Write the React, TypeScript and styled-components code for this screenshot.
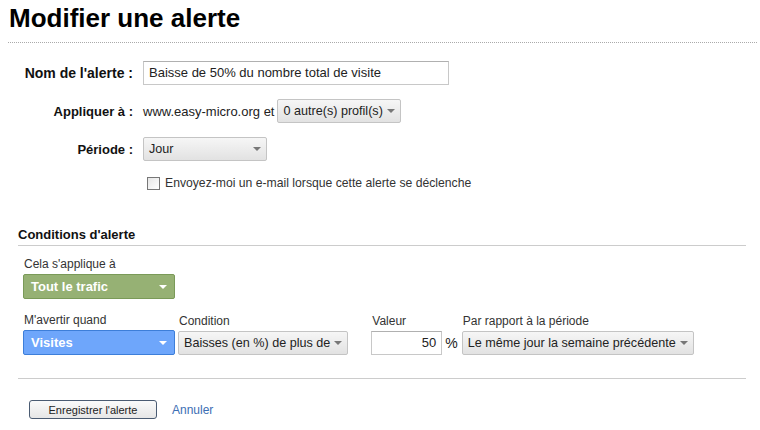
import React from 'react';
import styled, { createGlobalStyle } from 'styled-components';

const GlobalStyle = createGlobalStyle`
  body {
    margin: 0;
    background: #fff;
    font-family: "Liberation Sans", Arial, sans-serif;
    color: #222;
  }
`;

const Page = styled.div`
  width: 760px;
  padding: 3px 3px 0 8px;
  box-sizing: border-box;
`;

const Title = styled.h1`
  margin: 0;
  padding-left: 1px;
  font-size: 26px;
  line-height: 30px;
  font-weight: bold;
  color: #000;
  padding-bottom: 9px;
  border-bottom: 1px dotted #aaa;
`;

const Form = styled.div`
  display: grid;
  grid-template-columns: 125px auto;
  column-gap: 10px;
  row-gap: 14px;
  align-items: center;
  margin-top: 18px;
  justify-content: start;
`;

const Label = styled.label<{ $strong?: boolean }>`
  text-align: right;
  font-size: ${p => (p.$strong ? '14px' : '13px')};
  font-weight: bold;
  color: #111;
`;

const Row = styled.div`
  display: flex;
  align-items: center;
  gap: 3px;
  font-size: 13px;
`;

const TextInput = styled.div<{ $w: number; $right?: boolean }>`
  width: ${p => p.$w}px;
  height: 24px;
  box-sizing: border-box;
  border: 1px solid #c8c8c8;
  border-top-color: #b0b0b0;
  padding: 0 5px;
  font-size: 13px;
  line-height: 22px;
  color: #222;
  text-align: ${p => (p.$right ? 'right' : 'left')};
  background: #fff;
`;

const Caret = styled.span<{ $light?: boolean }>`
  width: 0;
  height: 0;
  border-left: 4px solid transparent;
  border-right: 4px solid transparent;
  border-top: 4px solid ${p => (p.$light ? '#fff' : '#777')};
  margin-left: 4px;
  flex-shrink: 0;
`;

const GrayButton = styled.div<{ $w?: number }>`
  display: inline-flex;
  align-items: center;
  justify-content: space-between;
  width: ${p => (p.$w ? `${p.$w}px` : 'auto')};
  height: 24px;
  box-sizing: border-box;
  padding: 0 5px 0 5px;
  border: 1px solid #c4c4c4;
  border-radius: 2px;
  background: linear-gradient(#f6f6f6, #e2e2e2);
  font-size: 12.6px;
  color: #222;
  white-space: nowrap;
`;

const ColorSelect = styled.div<{ $bg: string; $border: string }>`
  display: flex;
  align-items: center;
  justify-content: space-between;
  width: 152px;
  height: 25px;
  box-sizing: border-box;
  padding: 0 7px 0 7px;
  background: ${p => p.$bg};
  border: 1px solid ${p => p.$border};
  border-radius: 2px;
  color: #fff;
  font-weight: bold;
  font-size: 13px;
`;

const CheckRow = styled.div`
  grid-column: 2;
  display: flex;
  align-items: center;
  gap: 5px;
  padding-left: 4px;
  margin-top: 1px;
  font-size: 12.2px;
  color: #333;
`;

const Box = styled.span`
  width: 11px;
  height: 11px;
  border: 1px solid #777;
  background: linear-gradient(135deg, #e6e6e6, #fff);
`;

const Section = styled.section`
  margin: 37px 11px 0 10px;
`;

const SectionTitle = styled.h2`
  margin: 0;
  font-size: 13px;
  font-weight: bold;
  color: #111;
  line-height: 16px;
  padding-bottom: 2px;
  border-bottom: 1px solid #ccc;
`;

const Conditions = styled.div`
  padding: 11px 0 0 5px;
`;

const Field = styled.div<{ $offset?: number }>`
  display: flex;
  flex-direction: column;
  gap: 3px;
  margin-left: ${p => p.$offset ?? 0}px;
`;

const FieldLabel = styled.span`
  font-size: 12px;
  line-height: 14px;
  color: #333;
  padding-left: 1px;
`;

const FieldRow = styled.div`
  display: flex;
  align-items: flex-end;
  margin-top: 14px;
`;

const Percent = styled.span`
  font-size: 14px;
  color: #222;
  margin: 0 4px 4px 3px;
`;

const Footer = styled.div`
  margin-top: 23px;
  border-top: 1px solid #ccc;
  padding: 21px 0 0 11px;
  display: flex;
  align-items: center;
  gap: 15px;
`;

const SaveButton = styled.button`
  width: 128px;
  height: 19px;
  border: 1px solid #4a5b72;
  border-radius: 3px;
  background: linear-gradient(#fafafa, #e6e6e6);
  font-family: "Liberation Sans", Arial, sans-serif;
  font-size: 11px;
  color: #222;
  padding: 0;
`;

const Link = styled.a`
  font-size: 12px;
  color: #3c6eb4;
  text-decoration: none;
`;

export default function App() {
  return (
    <Page>
      <GlobalStyle />
      <Title>Modifier une alerte</Title>
      <Form>
        <Label $strong>Nom de l'alerte :</Label>
        <TextInput $w={306}>Baisse de 50% du nombre total de visite</TextInput>

        <Label>Appliquer à :</Label>
        <Row>
          <span>www.easy-micro.org et</span>
          <GrayButton>
            0 autre(s) profil(s)
            <Caret />
          </GrayButton>
        </Row>

        <Label>Période :</Label>
        <Row>
          <GrayButton $w={124}>
            Jour
            <Caret />
          </GrayButton>
        </Row>

        <CheckRow>
          <Box />
          Envoyez-moi un e-mail lorsque cette alerte se déclenche
        </CheckRow>
      </Form>

      <Section>
        <SectionTitle>Conditions d'alerte</SectionTitle>
        <Conditions>
          <Field>
            <FieldLabel>Cela s'applique à</FieldLabel>
            <ColorSelect $bg="#96b174" $border="#7a9a58">
              Tout le trafic
              <Caret $light />
            </ColorSelect>
          </Field>
          <FieldRow>
            <Field>
              <FieldLabel>M'avertir quand</FieldLabel>
              <ColorSelect $bg="#6ea6fb" $border="#3d7ed9">
                Visites
                <Caret $light />
              </ColorSelect>
            </Field>
            <Field $offset={3}>
              <FieldLabel>Condition</FieldLabel>
              <GrayButton>
                Baisses (en %) de plus de
                <Caret />
              </GrayButton>
            </Field>
            <Field $offset={23}>
              <FieldLabel>Valeur</FieldLabel>
              <TextInput $w={71} $right>50</TextInput>
            </Field>
            <Percent>%</Percent>
            <Field>
              <FieldLabel>Par rapport à la période</FieldLabel>
              <GrayButton>
                Le même jour la semaine précédente
                <Caret />
              </GrayButton>
            </Field>
          </FieldRow>
        </Conditions>
        <Footer>
          <SaveButton>Enregistrer l'alerte</SaveButton>
          <Link href="#">Annuler</Link>
        </Footer>
      </Section>
    </Page>
  );
}
